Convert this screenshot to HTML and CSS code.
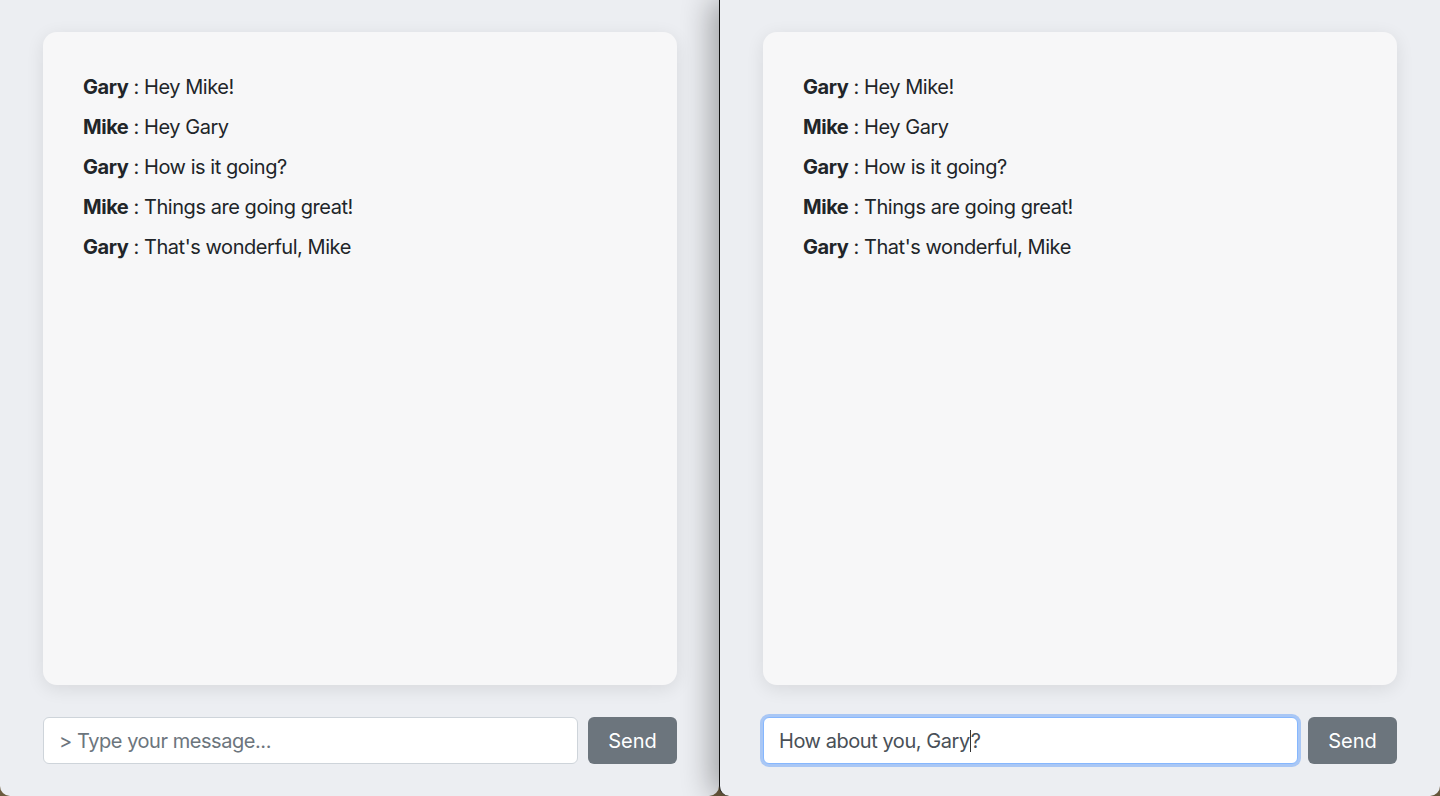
FILE: index.html
```html
<!DOCTYPE html>
<html lang="en">
<head>
<meta charset="utf-8">
<title>Chat</title>
<link rel="stylesheet" href="styles.css">
</head>
<body>
<div class="desktop">
  <section class="pane pane-left">
    <div class="card">
      <p class="msg"><b>Gary</b> : Hey Mike!</p>
      <p class="msg"><b>Mike</b> : Hey Gary</p>
      <p class="msg"><b>Gary</b> : How is it going?</p>
      <p class="msg"><b>Mike</b> : Things are going great!</p>
      <p class="msg"><b>Gary</b> : That's wonderful, Mike</p>
    </div>
    <div class="composer">
      <input class="field" type="text" placeholder="> Type your message...">
      <button class="send">Send</button>
    </div>
  </section>
  <section class="pane pane-right">
    <div class="card">
      <p class="msg"><b>Gary</b> : Hey Mike!</p>
      <p class="msg"><b>Mike</b> : Hey Gary</p>
      <p class="msg"><b>Gary</b> : How is it going?</p>
      <p class="msg"><b>Mike</b> : Things are going great!</p>
      <p class="msg"><b>Gary</b> : That's wonderful, Mike</p>
    </div>
    <div class="composer">
      <div class="field field-focus">How about you, Gary<span class="caret"></span>?</div>
      <button class="send">Send</button>
    </div>
  </section>
</div>
</body>
</html>
```

FILE: styles.css
```css
* { box-sizing: border-box; }
html, body { margin: 0; padding: 0; }
body {
  background: #6b5b3e;
  font-family: Inter, "Noto Sans", "Liberation Sans", sans-serif;
  color: #212529;
}
.desktop {
  display: flex;
  width: 1440px;
  height: 796px;
  overflow: hidden;
}
.pane {
  background: #eceef2;
  height: 796px;
  display: flex;
  flex-direction: column;
  gap: 32px;
  padding-top: 32px;
  padding-bottom: 32px;
  border-radius: 0 0 10px 10px;
}
.pane-left {
  width: 719px;
  padding-left: 43px;
  padding-right: 42px;
}
.pane-right {
  width: 721px;
  padding-left: 43px;
  padding-right: 43px;
  border-left: 1px solid #111;
  box-shadow: -8px 0 30px rgba(0, 0, 0, 0.32);
}
.card {
  flex: 1;
  background: #f7f7f8;
  border-radius: 14px;
  box-shadow: 0 4px 18px rgba(0, 0, 0, 0.09);
  padding: 35px 40px;
}
.msg {
  margin: 0;
  font-size: 20px;
  line-height: 40px;
  letter-spacing: -0.45px;
}
.msg b { font-weight: 700; }
.composer {
  display: flex;
  gap: 10px;
  height: 47px;
}
.field {
  flex: 1;
  height: 47px;
  border: 1px solid #ced4da;
  border-radius: 6px;
  background: #fff;
  padding: 0 15px;
  font-family: inherit;
  font-size: 20px;
  letter-spacing: -0.45px;
  color: #495057;
  outline: none;
  display: flex;
  align-items: center;
}
.field::placeholder { color: #6c757d; }
.field-focus {
  border-color: #86b7fe;
  box-shadow: 0 0 0 3px rgba(13, 110, 253, 0.3);
  white-space: pre;
}
.caret {
  display: inline-block;
  width: 1px;
  height: 22px;
  background: #333;
}
.send {
  width: 89px;
  height: 47px;
  border: none;
  border-radius: 6px;
  background: #6c757d;
  color: #fff;
  font-family: inherit;
  font-size: 20px;
  padding: 0;
}
```
